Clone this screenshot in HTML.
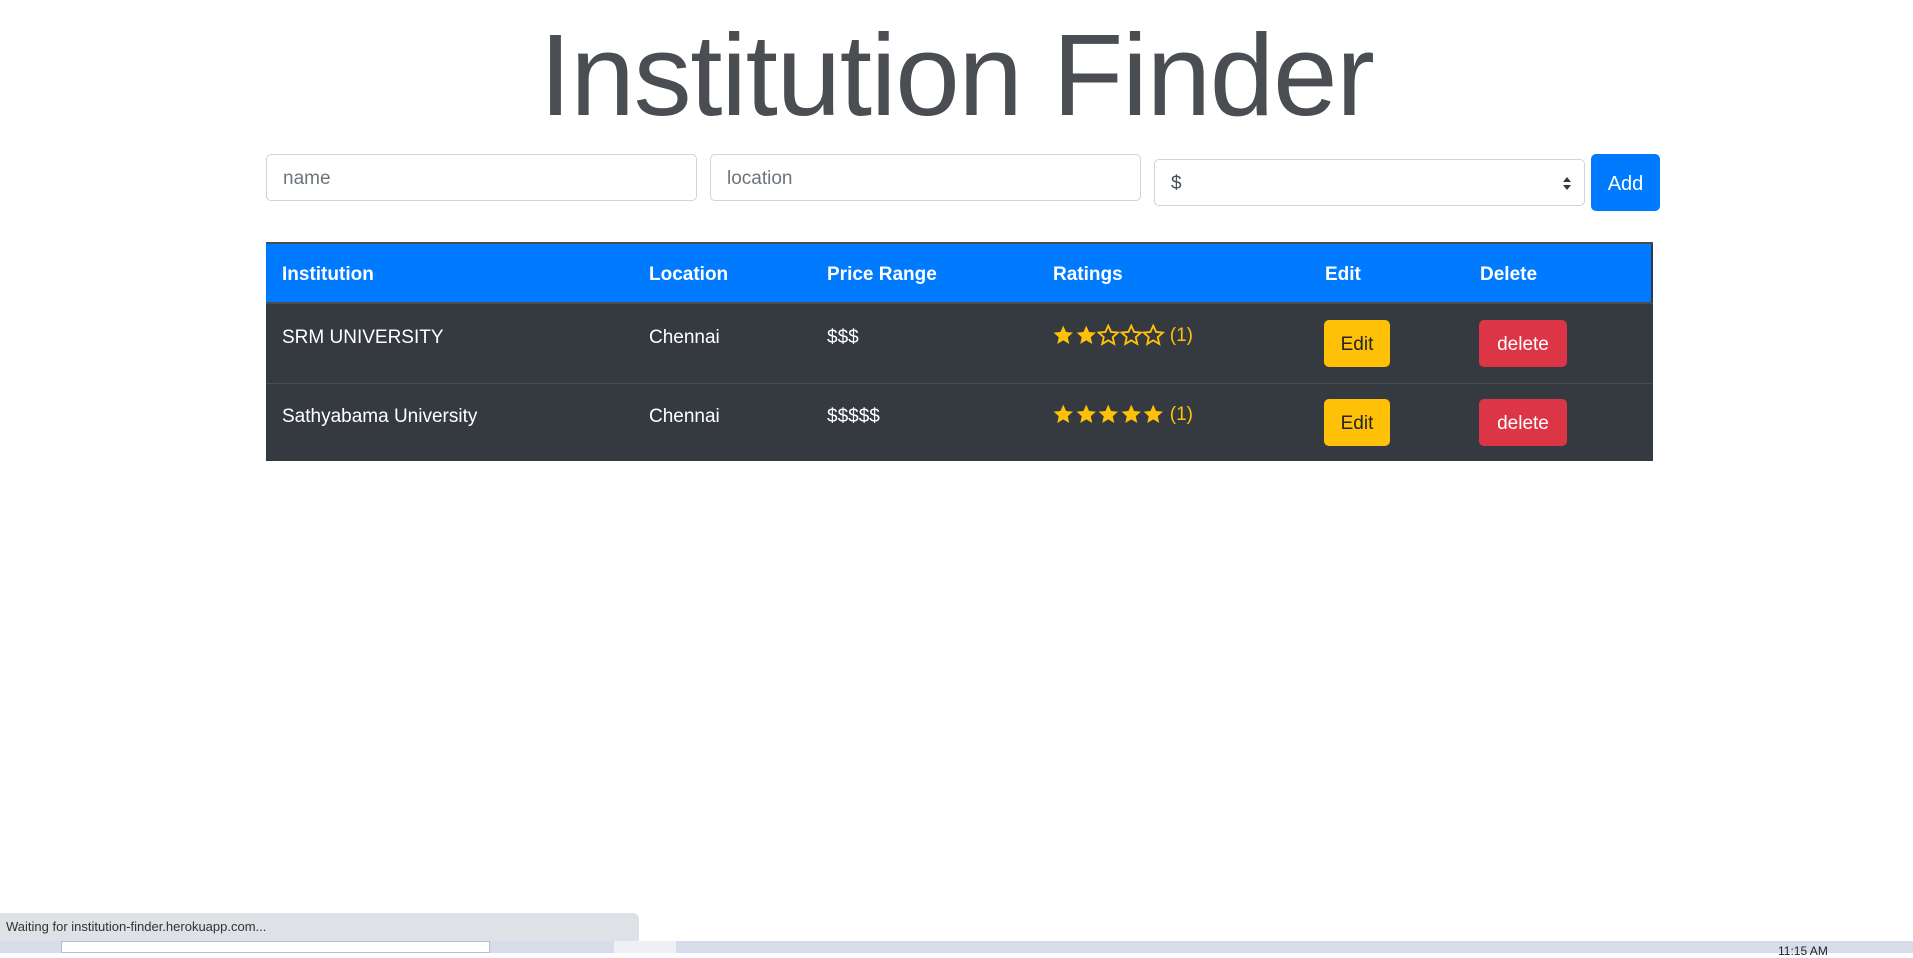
<!DOCTYPE html>
<html><head><meta charset="utf-8"><style>
*{box-sizing:border-box;margin:0;padding:0}
body{width:1913px;height:953px;background:#fff;font-family:"Liberation Sans",sans-serif;position:relative;overflow:hidden;color:#212529}
.abs{position:absolute}
h1{position:absolute;left:0;width:1913px;text-align:center;top:5px;font-size:116px;line-height:140px;font-weight:normal;letter-spacing:-1.3px;color:#4a4e52}
.inp{position:absolute;border:1px solid #ced4da;border-radius:5px;background:#fff;font-size:19px;color:#6c757d;padding-left:16px;display:flex;align-items:center;padding-top:3px}
.btn{position:absolute;border-radius:5px;display:flex;align-items:center;justify-content:center;font-size:19px;padding-top:3px}
.th{position:absolute;color:#fff;font-weight:bold;font-size:19px;top:264px}
.td{position:absolute;color:#fff;font-size:19px}
.stars{position:absolute;color:#ffc107;font-size:19px;display:flex;align-items:center}
.stars svg{width:22.5px;height:23px;margin-right:0px}
</style></head><body>
<h1>Institution Finder</h1>
<div class="inp" style="left:266px;top:154px;width:431px;height:47px">name</div>
<div class="inp" style="left:710px;top:154px;width:431px;height:47px">location</div>
<div class="inp" style="left:1154px;top:159px;width:431px;height:47px;color:#495057">$
<svg class="abs" style="right:12px;top:16px" width="10" height="15" viewBox="0 0 10 15"><path d="M5 1L9 6H1z M5 14L9 9H1z" fill="#343a40"/></svg></div>
<div class="btn" style="left:1591px;top:154px;width:69px;height:57px;background:#007bff;color:#fff;font-size:20px">Add</div>

<div class="abs" style="left:266px;top:242px;width:1387px;height:219px;background:#343a40"></div>
<div class="abs" style="left:266px;top:242px;width:1387px;height:2px;background:#454d55"></div>
<div class="abs" style="left:266px;top:244px;width:1385px;height:58px;background:#007bff"></div>
<div class="abs" style="left:266px;top:302px;width:1387px;height:2px;background:#454d55"></div>
<div class="abs" style="left:266px;top:383px;width:1387px;height:1px;background:#454d55"></div>

<div class="th" style="left:282px">Institution</div>
<div class="th" style="left:649px">Location</div>
<div class="th" style="left:827px">Price Range</div>
<div class="th" style="left:1053px">Ratings</div>
<div class="th" style="left:1325px">Edit</div>
<div class="th" style="left:1480px">Delete</div>

<div class="td" style="left:282px;top:327px">SRM UNIVERSITY</div>
<div class="td" style="left:649px;top:327px">Chennai</div>
<div class="td" style="left:827px;top:327px">$$$</div>
<div class="td" style="left:282px;top:406px">Sathyabama University</div>
<div class="td" style="left:649px;top:406px">Chennai</div>
<div class="td" style="left:827px;top:406px">$$$$$</div>

<svg width="0" height="0" style="position:absolute"><defs>
<path id="st" d="M12 1.5l3 6.7 7.3.7-5.5 4.9 1.6 7.2-6.4-3.8-6.4 3.8 1.6-7.2L1.7 8.9 9 8.2z"/></defs></svg>
<div class="stars" style="left:1052px;top:324px">
<svg viewBox="0 0 24 24"><use href="#st" fill="#ffc107"/></svg><svg viewBox="0 0 24 24"><use href="#st" fill="#ffc107"/></svg><svg viewBox="0 0 24 24"><use href="#st" fill="none" stroke="#ffc107" stroke-width="2"/></svg><svg viewBox="0 0 24 24"><use href="#st" fill="none" stroke="#ffc107" stroke-width="2"/></svg><svg viewBox="0 0 24 24"><use href="#st" fill="none" stroke="#ffc107" stroke-width="2"/></svg>&nbsp;(1)</div>
<div class="stars" style="left:1052px;top:403px">
<svg viewBox="0 0 24 24"><use href="#st" fill="#ffc107"/></svg><svg viewBox="0 0 24 24"><use href="#st" fill="#ffc107"/></svg><svg viewBox="0 0 24 24"><use href="#st" fill="#ffc107"/></svg><svg viewBox="0 0 24 24"><use href="#st" fill="#ffc107"/></svg><svg viewBox="0 0 24 24"><use href="#st" fill="#ffc107"/></svg>&nbsp;(1)</div>

<div class="btn" style="left:1324px;top:320px;width:66px;height:47px;background:#ffc107;color:#212529">Edit</div>
<div class="btn" style="left:1479px;top:320px;width:88px;height:47px;background:#dc3545;color:#fff">delete</div>
<div class="btn" style="left:1324px;top:399px;width:66px;height:47px;background:#ffc107;color:#212529">Edit</div>
<div class="btn" style="left:1479px;top:399px;width:88px;height:47px;background:#dc3545;color:#fff">delete</div>

<div class="abs" style="left:0;top:913px;width:639px;height:28px;background:#dee1e6;border-top-right-radius:6px;font-size:13px;color:#333;padding:6px 0 0 6px">Waiting for institution-finder.herokuapp.com...</div>
<div class="abs" style="left:0;top:941px;width:1913px;height:12px;background:#d6dcea"></div>
<div class="abs" style="left:61px;top:941px;width:429px;height:12px;background:#fff;border:1px solid #b8bfcc"></div>
<div class="abs" style="left:614px;top:941px;width:62px;height:12px;background:#eef0f5"></div>
<div class="abs" style="left:1778px;top:944px;font-size:12px;color:#222">11:15 AM</div>
</body></html>
